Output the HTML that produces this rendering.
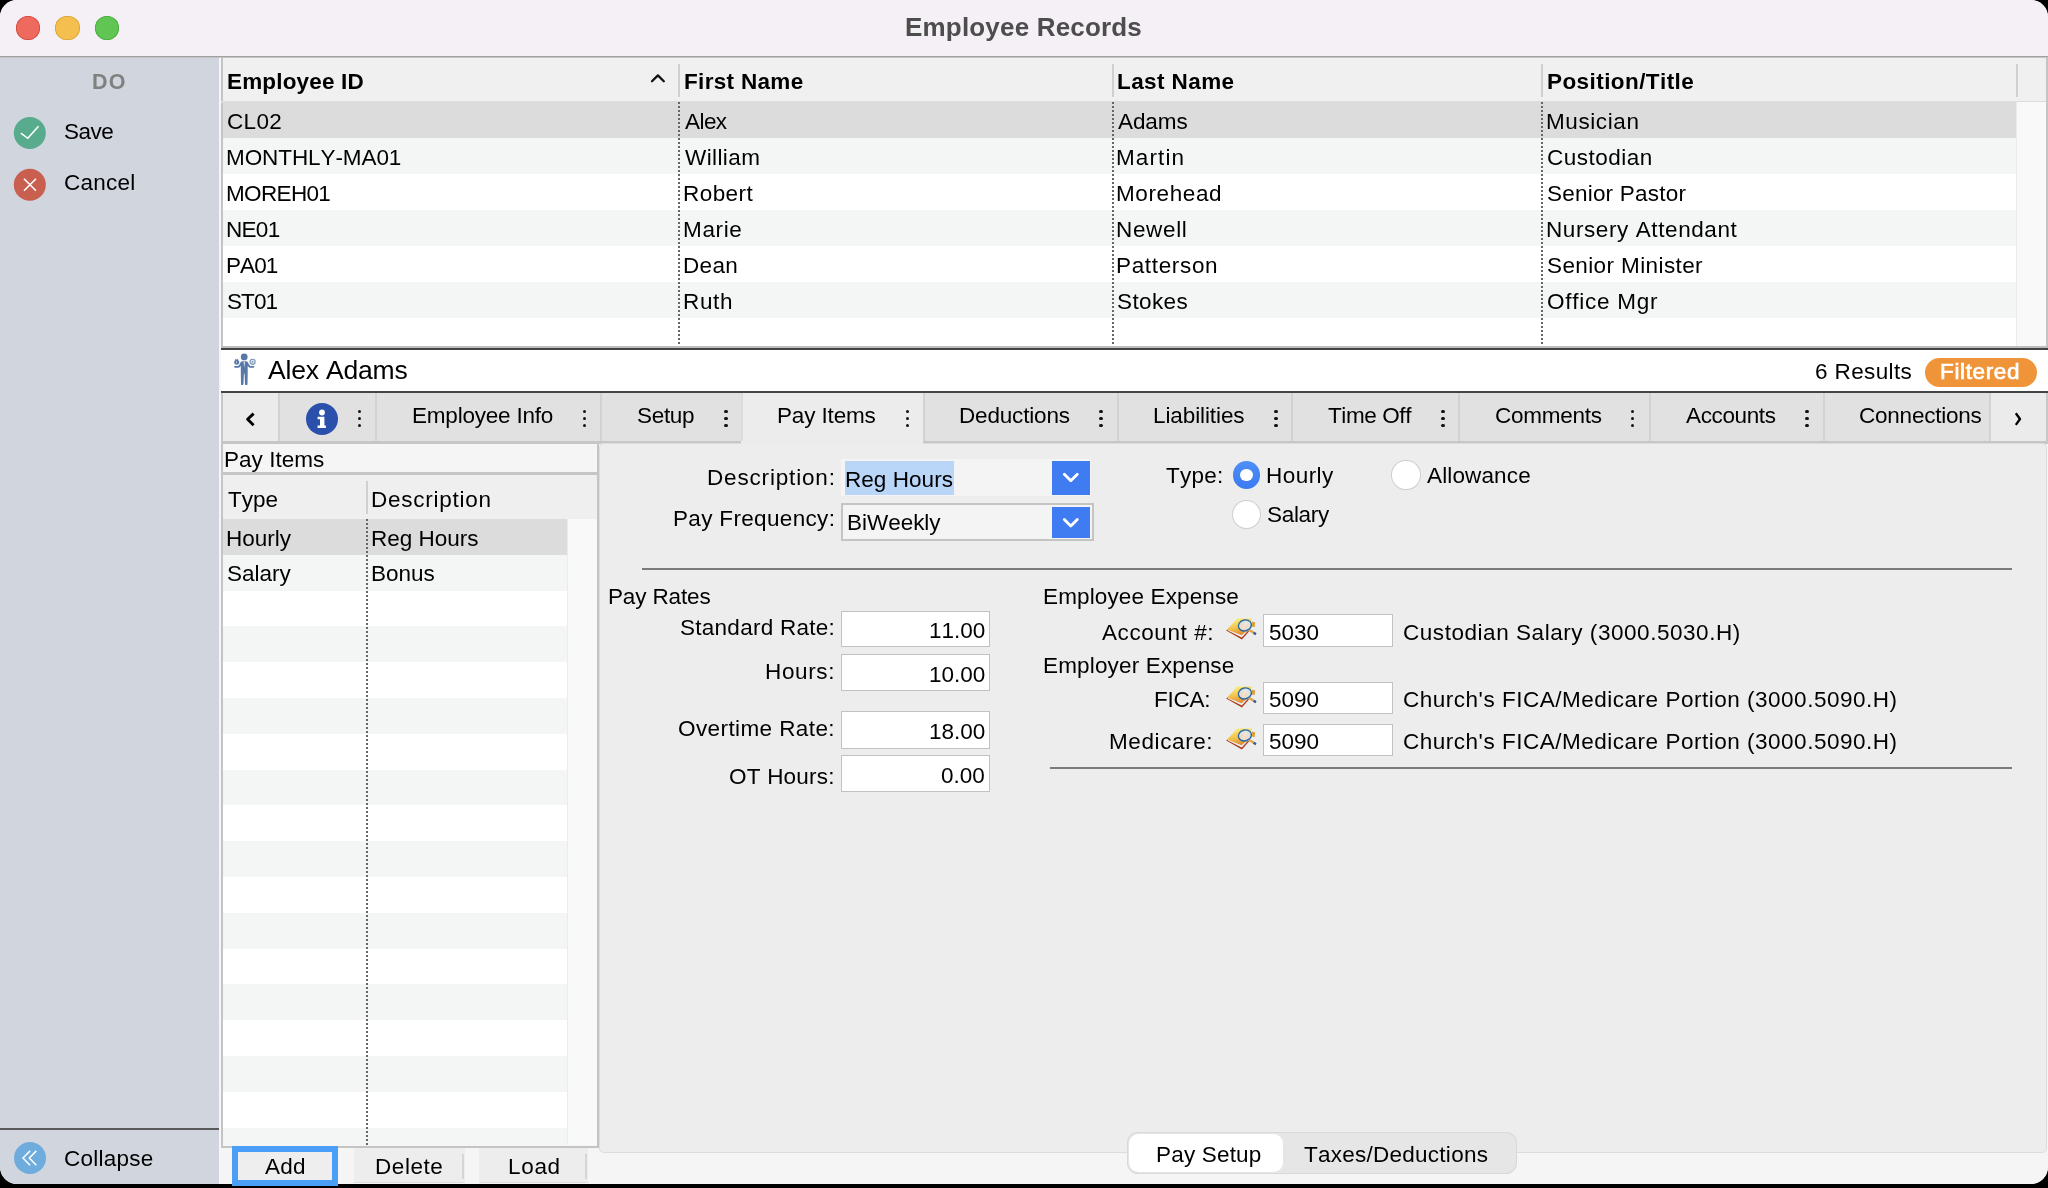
<!DOCTYPE html>
<html><head><meta charset="utf-8"><title>Employee Records</title>
<style>
html,body{margin:0;padding:0;width:2048px;height:1188px;overflow:hidden;background:#000;}
body{font-family:"Liberation Sans",sans-serif;}
#win{position:absolute;left:0;top:0;width:2048px;height:1184px;overflow:hidden;border-radius:17px;background:#f5f5f5;}
.t{position:absolute;white-space:pre;font-kerning:none;will-change:transform;}
.r{position:absolute;}
</style></head><body>
<div id="win">
<div class="r" style="left:0px;top:0px;width:2048px;height:56px;background:#f5f0f6;"></div>
<div class="r" style="left:15.7px;top:15.7px;width:24.6px;height:24.6px;border-radius:50%;background:#ee6a5e;box-shadow:inset 0 0 0 0.8px #d2473c"></div>
<div class="r" style="left:55.400000000000006px;top:15.7px;width:24.6px;height:24.6px;border-radius:50%;background:#f5bf4f;box-shadow:inset 0 0 0 0.8px #d9a12f"></div>
<div class="r" style="left:94.9px;top:15.7px;width:24.6px;height:24.6px;border-radius:50%;background:#61c554;box-shadow:inset 0 0 0 0.8px #45a83b"></div>
<div class="t" style="left:904.76px;top:14px;font-size:26px;line-height:26px;font-weight:bold;color:#4d4d4d;letter-spacing:0.181px;">Employee Records</div>
<div class="r" style="left:0px;top:57px;width:219px;height:1127px;background:#d1d5dd;"></div>
<div class="r" style="left:219px;top:57px;width:2px;height:1127px;background:#f6f6f8;"></div>
<div class="t" style="left:91.56px;top:72px;font-size:21.5px;line-height:21.5px;font-weight:bold;color:#808080;letter-spacing:1.291px;">DO</div>
<svg class="r" style="left:13px;top:116px" width="34" height="34" viewBox="0 0 34 34"><circle cx="16.8" cy="17" r="16" fill="#58ab8c"/><polyline points="7.8,17.2 14.8,22.3 25.5,10.3" fill="none" stroke="#fff" stroke-width="1.6"/></svg>
<div class="t" style="left:63.78px;top:121px;font-size:22.5px;line-height:22.5px;font-weight:normal;color:#000;letter-spacing:-0.488px;">Save</div>
<svg class="r" style="left:13px;top:168px" width="34" height="34" viewBox="0 0 34 34"><circle cx="16.8" cy="16.8" r="16" fill="#c95f4f"/><path d="M11 10.8 L23 22.8 M23 10.8 L11 22.8" fill="none" stroke="#fff" stroke-width="1.6"/></svg>
<div class="t" style="left:63.66px;top:172px;font-size:22.5px;line-height:22.5px;font-weight:normal;color:#000;letter-spacing:0.242px;">Cancel</div>
<div class="r" style="left:0px;top:1128px;width:219px;height:2px;background:#5a5a5a;"></div>
<svg class="r" style="left:13px;top:1141px" width="34" height="34" viewBox="0 0 34 34"><circle cx="17" cy="17" r="16" fill="#6eacdd"/><path d="M17.1 9.9 L10 17 L17.1 24.3 M23.3 9.9 L16.3 17 L23.3 24.3" fill="none" stroke="#fff" stroke-width="1.5"/></svg>
<div class="t" style="left:63.66px;top:1148px;font-size:22.5px;line-height:22.5px;font-weight:normal;color:#000;letter-spacing:0.227px;">Collapse</div>
<div class="r" style="left:221px;top:57px;width:1827px;height:45px;background:#f0f0f0;"></div>
<div class="r" style="left:221px;top:57px;width:2px;height:290px;background:#c4c4c4;"></div>
<div class="r" style="left:221px;top:101px;width:1825px;height:1.5px;background:#dcdcdc;"></div>
<div class="t" style="left:226.79px;top:71px;font-size:22.5px;line-height:22.5px;font-weight:bold;color:#000;letter-spacing:0.171px;">Employee ID</div>
<div class="t" style="left:684.19px;top:71px;font-size:22.5px;line-height:22.5px;font-weight:bold;color:#000;letter-spacing:0.320px;">First Name</div>
<div class="t" style="left:1117.49px;top:71px;font-size:22.5px;line-height:22.5px;font-weight:bold;color:#000;letter-spacing:0.410px;">Last Name</div>
<div class="t" style="left:1547.29px;top:71px;font-size:22.5px;line-height:22.5px;font-weight:bold;color:#000;letter-spacing:0.425px;">Position/Title</div>
<div class="r" style="left:678px;top:64px;width:2px;height:33px;background:#d0d0d0;"></div>
<div class="r" style="left:1112px;top:64px;width:2px;height:33px;background:#d0d0d0;"></div>
<div class="r" style="left:1541px;top:64px;width:2px;height:33px;background:#d0d0d0;"></div>
<div class="r" style="left:2016px;top:64px;width:2px;height:33px;background:#d0d0d0;"></div>
<svg class="r" style="left:648px;top:71px" width="20" height="14" viewBox="0 0 20 14"><polyline points="4.0,10.2 9.9,4.4 15.8,10.2" fill="none" stroke="#111" stroke-width="2.3" stroke-linejoin="round" stroke-linecap="round"/></svg>
<div class="r" style="left:223px;top:101.6px;width:1793px;height:36px;background:#dcdcdc;"></div>
<div class="r" style="left:223px;top:137.6px;width:1793px;height:36px;background:#f4f5f5;"></div>
<div class="r" style="left:223px;top:173.6px;width:1793px;height:36px;background:#ffffff;"></div>
<div class="r" style="left:223px;top:209.6px;width:1793px;height:36px;background:#f4f5f5;"></div>
<div class="r" style="left:223px;top:245.6px;width:1793px;height:36px;background:#ffffff;"></div>
<div class="r" style="left:223px;top:281.6px;width:1793px;height:36px;background:#f4f5f5;"></div>
<div class="r" style="left:223px;top:317.6px;width:1793px;height:28.4px;background:#ffffff;"></div>
<div class="t" style="left:226.66px;top:111px;font-size:22.5px;line-height:22.5px;font-weight:normal;color:#000;letter-spacing:0.328px;">CL02</div>
<div class="t" style="left:684.96px;top:111px;font-size:22.5px;line-height:22.5px;font-weight:normal;color:#000;letter-spacing:-0.561px;">Alex</div>
<div class="t" style="left:1118.06px;top:111px;font-size:22.5px;line-height:22.5px;font-weight:normal;color:#000;letter-spacing:-0.092px;">Adams</div>
<div class="t" style="left:1546.25px;top:111px;font-size:22.5px;line-height:22.5px;font-weight:normal;color:#000;letter-spacing:0.589px;">Musician</div>
<div class="t" style="left:225.95px;top:147px;font-size:22.5px;line-height:22.5px;font-weight:normal;color:#000;letter-spacing:-0.085px;">MONTHLY-MA01</div>
<div class="t" style="left:684.90px;top:147px;font-size:22.5px;line-height:22.5px;font-weight:normal;color:#000;letter-spacing:0.399px;">William</div>
<div class="t" style="left:1116.25px;top:147px;font-size:22.5px;line-height:22.5px;font-weight:normal;color:#000;letter-spacing:1.119px;">Martin</div>
<div class="t" style="left:1546.96px;top:147px;font-size:22.5px;line-height:22.5px;font-weight:normal;color:#000;letter-spacing:0.486px;">Custodian</div>
<div class="t" style="left:225.95px;top:183px;font-size:22.5px;line-height:22.5px;font-weight:normal;color:#000;letter-spacing:-0.655px;">MOREH01</div>
<div class="t" style="left:683.15px;top:183px;font-size:22.5px;line-height:22.5px;font-weight:normal;color:#000;letter-spacing:0.436px;">Robert</div>
<div class="t" style="left:1116.25px;top:183px;font-size:22.5px;line-height:22.5px;font-weight:normal;color:#000;letter-spacing:0.611px;">Morehead</div>
<div class="t" style="left:1547.08px;top:183px;font-size:22.5px;line-height:22.5px;font-weight:normal;color:#000;letter-spacing:0.215px;">Senior Pastor</div>
<div class="t" style="left:225.95px;top:219px;font-size:22.5px;line-height:22.5px;font-weight:normal;color:#000;letter-spacing:-0.713px;">NE01</div>
<div class="t" style="left:683.15px;top:219px;font-size:22.5px;line-height:22.5px;font-weight:normal;color:#000;letter-spacing:0.646px;">Marie</div>
<div class="t" style="left:1116.25px;top:219px;font-size:22.5px;line-height:22.5px;font-weight:normal;color:#000;letter-spacing:0.666px;">Newell</div>
<div class="t" style="left:1546.25px;top:219px;font-size:22.5px;line-height:22.5px;font-weight:normal;color:#000;letter-spacing:0.592px;">Nursery Attendant</div>
<div class="t" style="left:225.95px;top:255px;font-size:22.5px;line-height:22.5px;font-weight:normal;color:#000;letter-spacing:-0.899px;">PA01</div>
<div class="t" style="left:683.15px;top:255px;font-size:22.5px;line-height:22.5px;font-weight:normal;color:#000;letter-spacing:0.339px;">Dean</div>
<div class="t" style="left:1116.25px;top:255px;font-size:22.5px;line-height:22.5px;font-weight:normal;color:#000;letter-spacing:0.663px;">Patterson</div>
<div class="t" style="left:1547.08px;top:255px;font-size:22.5px;line-height:22.5px;font-weight:normal;color:#000;letter-spacing:0.396px;">Senior Minister</div>
<div class="t" style="left:226.78px;top:291px;font-size:22.5px;line-height:22.5px;font-weight:normal;color:#000;letter-spacing:-0.886px;">ST01</div>
<div class="t" style="left:683.15px;top:291px;font-size:22.5px;line-height:22.5px;font-weight:normal;color:#000;letter-spacing:0.660px;">Ruth</div>
<div class="t" style="left:1117.08px;top:291px;font-size:22.5px;line-height:22.5px;font-weight:normal;color:#000;letter-spacing:0.370px;">Stokes</div>
<div class="t" style="left:1547.03px;top:291px;font-size:22.5px;line-height:22.5px;font-weight:normal;color:#000;letter-spacing:0.753px;">Office Mgr</div>
<div class="r" style="left:678.2px;top:102px;width:2px;height:244px;background:repeating-linear-gradient(to bottom,#666 0 2px,transparent 2px 4px)"></div>
<div class="r" style="left:1111.5px;top:102px;width:2px;height:244px;background:repeating-linear-gradient(to bottom,#666 0 2px,transparent 2px 4px)"></div>
<div class="r" style="left:1541px;top:102px;width:2px;height:244px;background:repeating-linear-gradient(to bottom,#666 0 2px,transparent 2px 4px)"></div>
<div class="r" style="left:2016px;top:102px;width:30px;height:244px;background:#f9f9f9;border-left:1px solid #ececec;box-sizing:border-box"></div>
<div class="r" style="left:2046px;top:57px;width:2px;height:290px;background:#c4c4c4;"></div>
<div class="r" style="left:221px;top:346px;width:1827px;height:2px;background:#bdbdbd;"></div>
<div class="r" style="left:221px;top:348px;width:1827px;height:2px;background:#444;"></div>
<div class="r" style="left:221px;top:350px;width:1827px;height:41px;background:#ffffff;"></div>
<div class="r" style="left:221px;top:391px;width:1827px;height:2.2px;background:#444;"></div>
<div class="r" style="left:221px;top:393.2px;width:1827px;height:0.8px;background:#c4c4c4;"></div>
<svg class="r" style="left:230px;top:352px" width="30" height="36" viewBox="0 0 30 36"><g fill="#5878a8">
<circle cx="14.2" cy="4.9" r="3.4"/>
<path d="M11.3 9.6 Q14.2 8.6 17.1 9.6 Q18.3 10.3 18.6 12 L20.3 14.1 L23.9 14.0 Q24.9 14.8 23.9 15.7 L19.6 15.8 L17.7 13.9 L17.7 20.5 L17.5 32.6 Q16.4 33.6 15.0 32.6 L14.55 21.5 L13.95 21.5 L13.4 32.6 Q12.1 33.6 11.0 32.6 L10.8 20.5 L10.8 13.9 L8.9 15.8 L4.6 15.7 Q3.6 14.8 4.6 14.0 L8.2 14.1 L9.9 12 Q10.2 10.3 11.3 9.6 Z"/>
<circle cx="6.7" cy="10.3" r="2.5"/><path d="M5.0 6.5 L6.1 7.6 L7.3 7.6 L8.4 6.5 L8.0 8.4 L5.4 8.4 Z"/>
</g>
<path d="M13.6 9.6 L14.9 9.6 L14.25 15.8 Z" fill="#fff"/>
<circle cx="22.6" cy="9.8" r="2.6" fill="#dfe6f0" stroke="#7a93bb" stroke-width="1.1"/>
<circle cx="22.6" cy="9.8" r="0.9" fill="#7a93bb"/>
<path d="M6.4 9.2 L6.9 9.2 L6.9 11.5 L6.4 11.5 Z" fill="#fff"/>
</svg>
<div class="t" style="left:268.15px;top:357px;font-size:26.5px;line-height:26.5px;font-weight:normal;color:#000;letter-spacing:-0.187px;">Alex Adams</div>
<div class="t" style="left:1815.16px;top:361px;font-size:22.5px;line-height:22.5px;font-weight:normal;color:#000;letter-spacing:0.383px;">6 Results</div>
<div class="r" style="left:1924.8px;top:357.8px;width:112.7px;height:29.4px;background:#f0943a;border-radius:15px"></div>
<div class="t" style="left:1940.15px;top:361px;font-size:22.5px;line-height:22.5px;font-weight:normal;color:#fff;letter-spacing:0.639px;-webkit-text-stroke:0.7px #fff">Filtered</div>
<div class="r" style="left:221px;top:393px;width:1827px;height:48px;background:#e1e1e1;"></div>
<div class="r" style="left:221px;top:393px;width:2px;height:50px;background:#c8c8c8;"></div>
<div class="r" style="left:223px;top:393px;width:55px;height:48px;background:#ebebeb;"></div>
<div class="r" style="left:1990px;top:393px;width:56px;height:48px;background:#ebebeb;"></div>
<div class="r" style="left:221px;top:441px;width:1827px;height:2.5px;background:#c6c6c6;"></div>
<div class="r" style="left:741px;top:393px;width:182px;height:51px;background:#ececec;"></div>
<div class="r" style="left:278px;top:393px;width:2px;height:48px;background:#d2d2d2;"></div>
<div class="r" style="left:374.7px;top:393px;width:2px;height:48px;background:#d2d2d2;"></div>
<div class="r" style="left:599.5px;top:393px;width:2px;height:48px;background:#d2d2d2;"></div>
<div class="r" style="left:922.5px;top:393px;width:2px;height:48px;background:#d2d2d2;"></div>
<div class="r" style="left:1116.7px;top:393px;width:2px;height:48px;background:#d2d2d2;"></div>
<div class="r" style="left:1290.5px;top:393px;width:2px;height:48px;background:#d2d2d2;"></div>
<div class="r" style="left:1457.5px;top:393px;width:2px;height:48px;background:#d2d2d2;"></div>
<div class="r" style="left:1648.5px;top:393px;width:2px;height:48px;background:#d2d2d2;"></div>
<div class="r" style="left:1822.5px;top:393px;width:2px;height:48px;background:#d2d2d2;"></div>
<div class="r" style="left:1988.5px;top:393px;width:2px;height:48px;background:#d2d2d2;"></div>
<div class="r" style="left:741px;top:393px;width:2px;height:50px;background:#dcdcdc;"></div>
<div class="r" style="left:2046px;top:393px;width:2px;height:50px;background:#c8c8c8;"></div>
<svg class="r" style="left:240px;top:408px" width="20" height="22" viewBox="0 0 20 22"><polyline points="13.6,5.6 7.6,11.3 13.6,17.2" fill="none" stroke="#000" stroke-width="2.9" stroke-linejoin="round"/></svg>
<svg class="r" style="left:2008px;top:408px" width="20" height="22" viewBox="0 0 20 22"><polyline points="7.8,5.3 12,11 7.8,16.8" fill="none" stroke="#000" stroke-width="2.3" stroke-linejoin="round"/></svg>
<svg class="r" style="left:305px;top:402px" width="34" height="34" viewBox="0 0 34 34"><circle cx="17" cy="17" r="16" fill="#2b50ab"/><circle cx="17" cy="10.5" r="2.9" fill="#fff"/><path d="M12.6 14.7 H19.4 V23.5 H20.9 V26 H12.6 V23.5 H15 V17.2 H12.6 Z" fill="#fff"/></svg>
<div class="t" style="left:411.55px;top:405px;font-size:22.5px;line-height:22.5px;font-weight:normal;color:#000;letter-spacing:-0.204px;">Employee Info</div>
<div class="t" style="left:636.58px;top:405px;font-size:22.5px;line-height:22.5px;font-weight:normal;color:#000;letter-spacing:-0.308px;">Setup</div>
<div class="t" style="left:776.95px;top:405px;font-size:22.5px;line-height:22.5px;font-weight:normal;color:#000;letter-spacing:-0.146px;">Pay Items</div>
<div class="t" style="left:958.65px;top:405px;font-size:22.5px;line-height:22.5px;font-weight:normal;color:#000;letter-spacing:-0.167px;">Deductions</div>
<div class="t" style="left:1152.65px;top:405px;font-size:22.5px;line-height:22.5px;font-weight:normal;color:#000;letter-spacing:-0.099px;">Liabilities</div>
<div class="t" style="left:1328.24px;top:405px;font-size:22.5px;line-height:22.5px;font-weight:normal;color:#000;letter-spacing:-0.397px;">Time Off</div>
<div class="t" style="left:1494.76px;top:405px;font-size:22.5px;line-height:22.5px;font-weight:normal;color:#000;letter-spacing:-0.246px;">Comments</div>
<div class="t" style="left:1686.26px;top:405px;font-size:22.5px;line-height:22.5px;font-weight:normal;color:#000;letter-spacing:-0.370px;">Accounts</div>
<div class="t" style="left:1859.36px;top:405px;font-size:22.5px;line-height:22.5px;font-weight:normal;color:#000;letter-spacing:-0.222px;">Connections</div>
<div class="r" style="left:357.85px;top:409.55px;width:3.5px;height:3.5px;border-radius:50%;background:#111"></div>
<div class="r" style="left:357.85px;top:416.75px;width:3.5px;height:3.5px;border-radius:50%;background:#111"></div>
<div class="r" style="left:357.85px;top:423.95px;width:3.5px;height:3.5px;border-radius:50%;background:#111"></div>
<div class="r" style="left:582.55px;top:409.55px;width:3.5px;height:3.5px;border-radius:50%;background:#111"></div>
<div class="r" style="left:582.55px;top:416.75px;width:3.5px;height:3.5px;border-radius:50%;background:#111"></div>
<div class="r" style="left:582.55px;top:423.95px;width:3.5px;height:3.5px;border-radius:50%;background:#111"></div>
<div class="r" style="left:724.15px;top:409.55px;width:3.5px;height:3.5px;border-radius:50%;background:#111"></div>
<div class="r" style="left:724.15px;top:416.75px;width:3.5px;height:3.5px;border-radius:50%;background:#111"></div>
<div class="r" style="left:724.15px;top:423.95px;width:3.5px;height:3.5px;border-radius:50%;background:#111"></div>
<div class="r" style="left:905.55px;top:409.55px;width:3.5px;height:3.5px;border-radius:50%;background:#111"></div>
<div class="r" style="left:905.55px;top:416.75px;width:3.5px;height:3.5px;border-radius:50%;background:#111"></div>
<div class="r" style="left:905.55px;top:423.95px;width:3.5px;height:3.5px;border-radius:50%;background:#111"></div>
<div class="r" style="left:1099.25px;top:409.55px;width:3.5px;height:3.5px;border-radius:50%;background:#111"></div>
<div class="r" style="left:1099.25px;top:416.75px;width:3.5px;height:3.5px;border-radius:50%;background:#111"></div>
<div class="r" style="left:1099.25px;top:423.95px;width:3.5px;height:3.5px;border-radius:50%;background:#111"></div>
<div class="r" style="left:1274.25px;top:409.55px;width:3.5px;height:3.5px;border-radius:50%;background:#111"></div>
<div class="r" style="left:1274.25px;top:416.75px;width:3.5px;height:3.5px;border-radius:50%;background:#111"></div>
<div class="r" style="left:1274.25px;top:423.95px;width:3.5px;height:3.5px;border-radius:50%;background:#111"></div>
<div class="r" style="left:1441.25px;top:409.55px;width:3.5px;height:3.5px;border-radius:50%;background:#111"></div>
<div class="r" style="left:1441.25px;top:416.75px;width:3.5px;height:3.5px;border-radius:50%;background:#111"></div>
<div class="r" style="left:1441.25px;top:423.95px;width:3.5px;height:3.5px;border-radius:50%;background:#111"></div>
<div class="r" style="left:1630.95px;top:409.55px;width:3.5px;height:3.5px;border-radius:50%;background:#111"></div>
<div class="r" style="left:1630.95px;top:416.75px;width:3.5px;height:3.5px;border-radius:50%;background:#111"></div>
<div class="r" style="left:1630.95px;top:423.95px;width:3.5px;height:3.5px;border-radius:50%;background:#111"></div>
<div class="r" style="left:1805.25px;top:409.55px;width:3.5px;height:3.5px;border-radius:50%;background:#111"></div>
<div class="r" style="left:1805.25px;top:416.75px;width:3.5px;height:3.5px;border-radius:50%;background:#111"></div>
<div class="r" style="left:1805.25px;top:423.95px;width:3.5px;height:3.5px;border-radius:50%;background:#111"></div>
<div class="r" style="left:221px;top:443.5px;width:2px;height:742px;background:#c4c4c4;"></div>
<div class="r" style="left:223px;top:443.5px;width:375px;height:29px;background:#f5f5f5;"></div>
<div class="r" style="left:221px;top:472.2px;width:377px;height:2.8px;background:#c6c6c6;"></div>
<div class="t" style="left:224.45px;top:449px;font-size:22.5px;line-height:22.5px;font-weight:normal;color:#000;letter-spacing:0.041px;">Pay Items</div>
<div class="r" style="left:223px;top:475px;width:374px;height:44px;background:#efefef;"></div>
<div class="r" style="left:366px;top:481px;width:2px;height:33px;background:#d0d0d0;"></div>
<div class="t" style="left:227.59px;top:489px;font-size:22.5px;line-height:22.5px;font-weight:normal;color:#000;letter-spacing:0.000px;">Type</div>
<div class="t" style="left:371.05px;top:489px;font-size:22.5px;line-height:22.5px;font-weight:normal;color:#000;letter-spacing:0.736px;">Description</div>
<div class="r" style="left:223px;top:519.0px;width:344px;height:35.8px;background:#dcdcdc;"></div>
<div class="r" style="left:223px;top:554.8px;width:344px;height:35.8px;background:#f4f5f5;"></div>
<div class="r" style="left:223px;top:590.6px;width:344px;height:35.8px;background:#ffffff;"></div>
<div class="r" style="left:223px;top:626.4px;width:344px;height:35.8px;background:#f4f5f5;"></div>
<div class="r" style="left:223px;top:662.2px;width:344px;height:35.8px;background:#ffffff;"></div>
<div class="r" style="left:223px;top:698.0px;width:344px;height:35.8px;background:#f4f5f5;"></div>
<div class="r" style="left:223px;top:733.8px;width:344px;height:35.8px;background:#ffffff;"></div>
<div class="r" style="left:223px;top:769.6px;width:344px;height:35.8px;background:#f4f5f5;"></div>
<div class="r" style="left:223px;top:805.4px;width:344px;height:35.8px;background:#ffffff;"></div>
<div class="r" style="left:223px;top:841.2px;width:344px;height:35.8px;background:#f4f5f5;"></div>
<div class="r" style="left:223px;top:877.0px;width:344px;height:35.8px;background:#ffffff;"></div>
<div class="r" style="left:223px;top:912.8px;width:344px;height:35.8px;background:#f4f5f5;"></div>
<div class="r" style="left:223px;top:948.6px;width:344px;height:35.8px;background:#ffffff;"></div>
<div class="r" style="left:223px;top:984.4px;width:344px;height:35.8px;background:#f4f5f5;"></div>
<div class="r" style="left:223px;top:1020.2px;width:344px;height:35.8px;background:#ffffff;"></div>
<div class="r" style="left:223px;top:1056.0px;width:344px;height:35.8px;background:#f4f5f5;"></div>
<div class="r" style="left:223px;top:1091.8px;width:344px;height:35.8px;background:#ffffff;"></div>
<div class="r" style="left:223px;top:1127.6px;width:344px;height:17.9px;background:#f4f5f5;"></div>
<div class="r" style="left:567px;top:519px;width:30px;height:626px;background:#f9f9f9;border-left:1px solid #ececec;box-sizing:border-box"></div>
<div class="r" style="left:366px;top:519px;width:2px;height:626px;background:repeating-linear-gradient(to bottom,#666 0 2px,transparent 2px 4px)"></div>
<div class="t" style="left:226.25px;top:528px;font-size:22.5px;line-height:22.5px;font-weight:normal;color:#000;letter-spacing:0.000px;">Hourly</div>
<div class="t" style="left:371.05px;top:528px;font-size:22.5px;line-height:22.5px;font-weight:normal;color:#000;letter-spacing:0.000px;">Reg Hours</div>
<div class="t" style="left:227.08px;top:563px;font-size:22.5px;line-height:22.5px;font-weight:normal;color:#000;letter-spacing:0.000px;">Salary</div>
<div class="t" style="left:371.05px;top:563px;font-size:22.5px;line-height:22.5px;font-weight:normal;color:#000;letter-spacing:0.000px;">Bonus</div>
<div class="r" style="left:597px;top:443.5px;width:2px;height:705px;background:#c4c4c4;"></div>
<div class="r" style="left:221px;top:1145.5px;width:378px;height:2.5px;background:#c4c4c4;"></div>
<div class="r" style="left:221px;top:1148px;width:1827px;height:36px;background:#f5f5f5;"></div>
<div class="r" style="left:236px;top:1148px;width:97px;height:34px;background:#eeeeee;"></div>
<div class="t" style="left:264.76px;top:1156px;font-size:22.5px;line-height:22.5px;font-weight:normal;color:#000;letter-spacing:0.280px;">Add</div>
<div class="r" style="left:353.7px;top:1148px;width:111.3px;height:34.5px;background:#ededed;border-bottom:1px solid #e0e0e0;box-sizing:border-box"></div>
<div class="r" style="left:461.5px;top:1154px;width:2px;height:25px;background:#d6d6d6;"></div>
<div class="t" style="left:375.35px;top:1156px;font-size:22.5px;line-height:22.5px;font-weight:normal;color:#000;letter-spacing:0.561px;">Delete</div>
<div class="r" style="left:478.7px;top:1148px;width:109.3px;height:34.5px;background:#ededed;border-bottom:1px solid #e0e0e0;box-sizing:border-box"></div>
<div class="r" style="left:584.5px;top:1154px;width:2px;height:25px;background:#d6d6d6;"></div>
<div class="t" style="left:508.15px;top:1156px;font-size:22.5px;line-height:22.5px;font-weight:normal;color:#000;letter-spacing:0.681px;">Load</div>
<div class="r" style="left:598.5px;top:443px;width:1448.5px;height:710px;background:#ededed;border-radius:5px;box-shadow:inset 0 0 0 1px #dcdcdc"></div>
<div class="r" style="left:741px;top:441px;width:182px;height:4px;background:#ececec;"></div>
<div class="t" style="left:707.05px;top:467px;font-size:22.5px;line-height:22.5px;font-weight:normal;color:#000;letter-spacing:0.828px;">Description:</div>
<div class="r" style="left:841px;top:459px;width:250px;height:37.2px;background:#f4f4f4;"></div>
<div class="r" style="left:845.2px;top:460.7px;width:108.7px;height:34px;background:#b9d5f8;"></div>
<div class="t" style="left:844.85px;top:469px;font-size:22.5px;line-height:22.5px;font-weight:normal;color:#000;letter-spacing:0.052px;">Reg Hours</div>
<div class="r" style="left:1052px;top:461px;width:37.6px;height:33.8px;background:#3f7bf1;"></div>
<svg class="r" style="left:1052px;top:461px" width="38" height="34" viewBox="0 0 38 34"><polyline points="12.3,13.3 18.8,19.8 25.3,13.3" fill="none" stroke="#fff" stroke-width="2.8" stroke-linecap="round" stroke-linejoin="round"/></svg>
<div class="t" style="left:673.05px;top:508px;font-size:22.5px;line-height:22.5px;font-weight:normal;color:#000;letter-spacing:0.333px;">Pay Frequency:</div>
<div class="r" style="left:841px;top:502.6px;width:252.5px;height:38.7px;background:#f4f4f4;border:2px solid #c4c4c4;box-sizing:border-box"></div>
<div class="r" style="left:1052px;top:507px;width:37.6px;height:31px;background:#3f7bf1;"></div>
<svg class="r" style="left:1052px;top:506px" width="38" height="34" viewBox="0 0 38 34"><polyline points="12.3,13.4 18.8,19.9 25.3,13.4" fill="none" stroke="#fff" stroke-width="2.8" stroke-linecap="round" stroke-linejoin="round"/></svg>
<div class="t" style="left:847.15px;top:512px;font-size:22.5px;line-height:22.5px;font-weight:normal;color:#000;letter-spacing:-0.026px;">BiWeekly</div>
<div class="t" style="left:1166.09px;top:465px;font-size:22.5px;line-height:22.5px;font-weight:normal;color:#000;letter-spacing:0.247px;">Type:</div>
<div class="r" style="left:1233px;top:461.3px;width:27.4px;height:27.4px;border-radius:50%;background:linear-gradient(#4f8ff7,#3a7af0)"></div>
<div class="r" style="left:1240.4px;top:468.7px;width:12.6px;height:12.6px;border-radius:50%;background:#fff"></div>
<div class="r" style="left:1233.0px;top:500.8px;width:27.4px;height:27.4px;border-radius:50%;background:#fff;box-shadow:0 0 0 1px #cfcfcf, 0 1px 1px rgba(0,0,0,0.08)"></div>
<div class="r" style="left:1392.2px;top:461.3px;width:27.4px;height:27.4px;border-radius:50%;background:#fff;box-shadow:0 0 0 1px #cfcfcf, 0 1px 1px rgba(0,0,0,0.08)"></div>
<div class="t" style="left:1266.35px;top:465px;font-size:22.5px;line-height:22.5px;font-weight:normal;color:#000;letter-spacing:0.455px;">Hourly</div>
<div class="t" style="left:1267.18px;top:504px;font-size:22.5px;line-height:22.5px;font-weight:normal;color:#000;letter-spacing:-0.322px;">Salary</div>
<div class="t" style="left:1427.26px;top:465px;font-size:22.5px;line-height:22.5px;font-weight:normal;color:#000;letter-spacing:0.136px;">Allowance</div>
<div class="r" style="left:642px;top:568px;width:1370px;height:2px;background:#7b7b7b;"></div>
<div class="t" style="left:608.15px;top:586px;font-size:22.5px;line-height:22.5px;font-weight:normal;color:#000;letter-spacing:-0.143px;">Pay Rates</div>
<div class="t" style="left:679.88px;top:617px;font-size:22.5px;line-height:22.5px;font-weight:normal;color:#000;letter-spacing:0.271px;">Standard Rate:</div>
<div class="r" style="left:841.2px;top:610.7px;width:148.6px;height:36.5px;background:#fff;border:1.5px solid #c2c2c2;box-sizing:border-box"></div>
<div class="t" style="left:928.57px;top:620px;font-size:22.5px;line-height:22.5px;font-weight:normal;color:#000;letter-spacing:0.000px;">11.00</div>
<div class="t" style="left:765.25px;top:661px;font-size:22.5px;line-height:22.5px;font-weight:normal;color:#000;letter-spacing:0.646px;">Hours:</div>
<div class="r" style="left:841.2px;top:654.1px;width:148.6px;height:36.6px;background:#fff;border:1.5px solid #c2c2c2;box-sizing:border-box"></div>
<div class="t" style="left:928.57px;top:664px;font-size:22.5px;line-height:22.5px;font-weight:normal;color:#000;letter-spacing:0.000px;">10.00</div>
<div class="t" style="left:678.13px;top:718px;font-size:22.5px;line-height:22.5px;font-weight:normal;color:#000;letter-spacing:0.410px;">Overtime Rate:</div>
<div class="r" style="left:841.2px;top:711.4px;width:148.6px;height:37.4px;background:#fff;border:1.5px solid #c2c2c2;box-sizing:border-box"></div>
<div class="t" style="left:928.57px;top:721px;font-size:22.5px;line-height:22.5px;font-weight:normal;color:#000;letter-spacing:0.000px;">18.00</div>
<div class="t" style="left:729.23px;top:766px;font-size:22.5px;line-height:22.5px;font-weight:normal;color:#000;letter-spacing:0.219px;">OT Hours:</div>
<div class="r" style="left:841.2px;top:755.4px;width:148.6px;height:37.0px;background:#fff;border:1.5px solid #c2c2c2;box-sizing:border-box"></div>
<div class="t" style="left:941.09px;top:765px;font-size:22.5px;line-height:22.5px;font-weight:normal;color:#000;letter-spacing:0.000px;">0.00</div>
<div class="t" style="left:1043.15px;top:586px;font-size:22.5px;line-height:22.5px;font-weight:normal;color:#000;letter-spacing:0.132px;">Employee Expense</div>
<div class="t" style="left:1043.15px;top:655px;font-size:22.5px;line-height:22.5px;font-weight:normal;color:#000;letter-spacing:0.160px;">Employer Expense</div>
<div class="t" style="left:1102.36px;top:622px;font-size:22.5px;line-height:22.5px;font-weight:normal;color:#000;letter-spacing:0.587px;">Account #:</div>
<svg class="r" style="left:1226px;top:617.3px" width="32" height="24" viewBox="0 0 32 24">
<defs><linearGradient id="bkAcc" x1="0.2" y1="0" x2="0.5" y2="1"><stop offset="0" stop-color="#fdf37c"/><stop offset="0.55" stop-color="#f2c24e"/><stop offset="1" stop-color="#e0892e"/></linearGradient>
<radialGradient id="glAcc" cx="0.35" cy="0.6" r="0.7"><stop offset="0" stop-color="#f5d4b8"/><stop offset="0.6" stop-color="#e6e2da"/><stop offset="1" stop-color="#c4e4f2"/></radialGradient></defs>
<g transform="translate(0,0.8)">
<path d="M0.2 12.6 L15.9 21.6 L23 13.6 L21.6 12.2 L15.6 18.8 L1.2 11.6 Z" fill="#ad3c12"/>
<path d="M1.8 12.6 L15.8 19.6 L21.8 13.3 L21.3 12.6 L15.6 17.8 L2.6 11.8 Z" fill="#eef0fb"/>
<path d="M11.2 0.6 L26 0.6 L21.6 12.4 L15.5 17.4 L1.0 11.8 Z" fill="url(#bkAcc)"/>
<path d="M26.2 3.8 L29.2 4.6 L28.6 9.2 L25.6 8.6 Z" fill="#d9a03a"/>
<path d="M23.2 12.2 L29.4 16.0" stroke="#e2a53c" stroke-width="2.4"/>
<path d="M27.6 14.9 L30 16.4" stroke="#2f5f9f" stroke-width="2.2"/>
<ellipse cx="18.9" cy="7.6" rx="6.6" ry="5.4" transform="rotate(-18 18.9 7.6)" fill="url(#glAcc)" stroke="#2d6ba3" stroke-width="1.4"/>
<path d="M20.5 4.2 L16.5 10.8" stroke="#fff" stroke-width="0.8" opacity="0.7"/>
</g>
</svg>
<div class="r" style="left:1263.4px;top:614.3px;width:130px;height:33.1px;background:#fff;border:1.5px solid #c2c2c2;box-sizing:border-box"></div>
<div class="t" style="left:1268.80px;top:622px;font-size:22.5px;line-height:22.5px;font-weight:normal;color:#000;letter-spacing:0.000px;">5030</div>
<div class="t" style="left:1403.16px;top:622px;font-size:22.5px;line-height:22.5px;font-weight:normal;color:#000;letter-spacing:0.545px;">Custodian Salary (3000.5030.H)</div>
<div class="t" style="left:1154.35px;top:689px;font-size:22.5px;line-height:22.5px;font-weight:normal;color:#000;letter-spacing:-0.251px;">FICA:</div>
<svg class="r" style="left:1226px;top:684.7px" width="32" height="24" viewBox="0 0 32 24">
<defs><linearGradient id="bkFIC" x1="0.2" y1="0" x2="0.5" y2="1"><stop offset="0" stop-color="#fdf37c"/><stop offset="0.55" stop-color="#f2c24e"/><stop offset="1" stop-color="#e0892e"/></linearGradient>
<radialGradient id="glFIC" cx="0.35" cy="0.6" r="0.7"><stop offset="0" stop-color="#f5d4b8"/><stop offset="0.6" stop-color="#e6e2da"/><stop offset="1" stop-color="#c4e4f2"/></radialGradient></defs>
<g transform="translate(0,0.8)">
<path d="M0.2 12.6 L15.9 21.6 L23 13.6 L21.6 12.2 L15.6 18.8 L1.2 11.6 Z" fill="#ad3c12"/>
<path d="M1.8 12.6 L15.8 19.6 L21.8 13.3 L21.3 12.6 L15.6 17.8 L2.6 11.8 Z" fill="#eef0fb"/>
<path d="M11.2 0.6 L26 0.6 L21.6 12.4 L15.5 17.4 L1.0 11.8 Z" fill="url(#bkFIC)"/>
<path d="M26.2 3.8 L29.2 4.6 L28.6 9.2 L25.6 8.6 Z" fill="#d9a03a"/>
<path d="M23.2 12.2 L29.4 16.0" stroke="#e2a53c" stroke-width="2.4"/>
<path d="M27.6 14.9 L30 16.4" stroke="#2f5f9f" stroke-width="2.2"/>
<ellipse cx="18.9" cy="7.6" rx="6.6" ry="5.4" transform="rotate(-18 18.9 7.6)" fill="url(#glFIC)" stroke="#2d6ba3" stroke-width="1.4"/>
<path d="M20.5 4.2 L16.5 10.8" stroke="#fff" stroke-width="0.8" opacity="0.7"/>
</g>
</svg>
<div class="r" style="left:1263.4px;top:681.7px;width:130px;height:32.8px;background:#fff;border:1.5px solid #c2c2c2;box-sizing:border-box"></div>
<div class="t" style="left:1268.80px;top:689px;font-size:22.5px;line-height:22.5px;font-weight:normal;color:#000;letter-spacing:0.000px;">5090</div>
<div class="t" style="left:1403.16px;top:689px;font-size:22.5px;line-height:22.5px;font-weight:normal;color:#000;letter-spacing:0.512px;">Church's FICA/Medicare Portion (3000.5090.H)</div>
<div class="t" style="left:1108.85px;top:731px;font-size:22.5px;line-height:22.5px;font-weight:normal;color:#000;letter-spacing:0.601px;">Medicare:</div>
<svg class="r" style="left:1226px;top:726.6px" width="32" height="24" viewBox="0 0 32 24">
<defs><linearGradient id="bkMed" x1="0.2" y1="0" x2="0.5" y2="1"><stop offset="0" stop-color="#fdf37c"/><stop offset="0.55" stop-color="#f2c24e"/><stop offset="1" stop-color="#e0892e"/></linearGradient>
<radialGradient id="glMed" cx="0.35" cy="0.6" r="0.7"><stop offset="0" stop-color="#f5d4b8"/><stop offset="0.6" stop-color="#e6e2da"/><stop offset="1" stop-color="#c4e4f2"/></radialGradient></defs>
<g transform="translate(0,0.8)">
<path d="M0.2 12.6 L15.9 21.6 L23 13.6 L21.6 12.2 L15.6 18.8 L1.2 11.6 Z" fill="#ad3c12"/>
<path d="M1.8 12.6 L15.8 19.6 L21.8 13.3 L21.3 12.6 L15.6 17.8 L2.6 11.8 Z" fill="#eef0fb"/>
<path d="M11.2 0.6 L26 0.6 L21.6 12.4 L15.5 17.4 L1.0 11.8 Z" fill="url(#bkMed)"/>
<path d="M26.2 3.8 L29.2 4.6 L28.6 9.2 L25.6 8.6 Z" fill="#d9a03a"/>
<path d="M23.2 12.2 L29.4 16.0" stroke="#e2a53c" stroke-width="2.4"/>
<path d="M27.6 14.9 L30 16.4" stroke="#2f5f9f" stroke-width="2.2"/>
<ellipse cx="18.9" cy="7.6" rx="6.6" ry="5.4" transform="rotate(-18 18.9 7.6)" fill="url(#glMed)" stroke="#2d6ba3" stroke-width="1.4"/>
<path d="M20.5 4.2 L16.5 10.8" stroke="#fff" stroke-width="0.8" opacity="0.7"/>
</g>
</svg>
<div class="r" style="left:1263.4px;top:723.6px;width:130px;height:32.9px;background:#fff;border:1.5px solid #c2c2c2;box-sizing:border-box"></div>
<div class="t" style="left:1268.80px;top:731px;font-size:22.5px;line-height:22.5px;font-weight:normal;color:#000;letter-spacing:0.000px;">5090</div>
<div class="t" style="left:1403.16px;top:731px;font-size:22.5px;line-height:22.5px;font-weight:normal;color:#000;letter-spacing:0.512px;">Church's FICA/Medicare Portion (3000.5090.H)</div>
<div class="r" style="left:1050px;top:767px;width:962px;height:2.2px;background:#7b7b7b;"></div>
<div class="r" style="left:1127.4px;top:1132.3px;width:389.6px;height:41.4px;border-radius:11px;background:#e6e6e6;box-shadow:inset 0 0 0 1px #d9d9d9"></div>
<div class="r" style="left:1128.5px;top:1134px;width:154px;height:38px;border-radius:9.5px;background:#fff"></div>
<div class="t" style="left:1156.35px;top:1144px;font-size:22.5px;line-height:22.5px;font-weight:normal;color:#000;letter-spacing:0.184px;">Pay Setup</div>
<div class="t" style="left:1304.29px;top:1144px;font-size:22.5px;line-height:22.5px;font-weight:normal;color:#000;letter-spacing:0.255px;">Taxes/Deductions</div>
<div class="r" style="left:0px;top:56px;width:2048px;height:1px;background:#a0a0a0;"></div>
<div class="r" style="left:0px;top:57px;width:2048px;height:1px;background:#c4c4c4;"></div>
</div>
<div class="r" style="left:232px;top:1146.2px;width:106px;height:39.5px;border:6px solid #4a9ef5;box-sizing:border-box"></div>
</body></html>
